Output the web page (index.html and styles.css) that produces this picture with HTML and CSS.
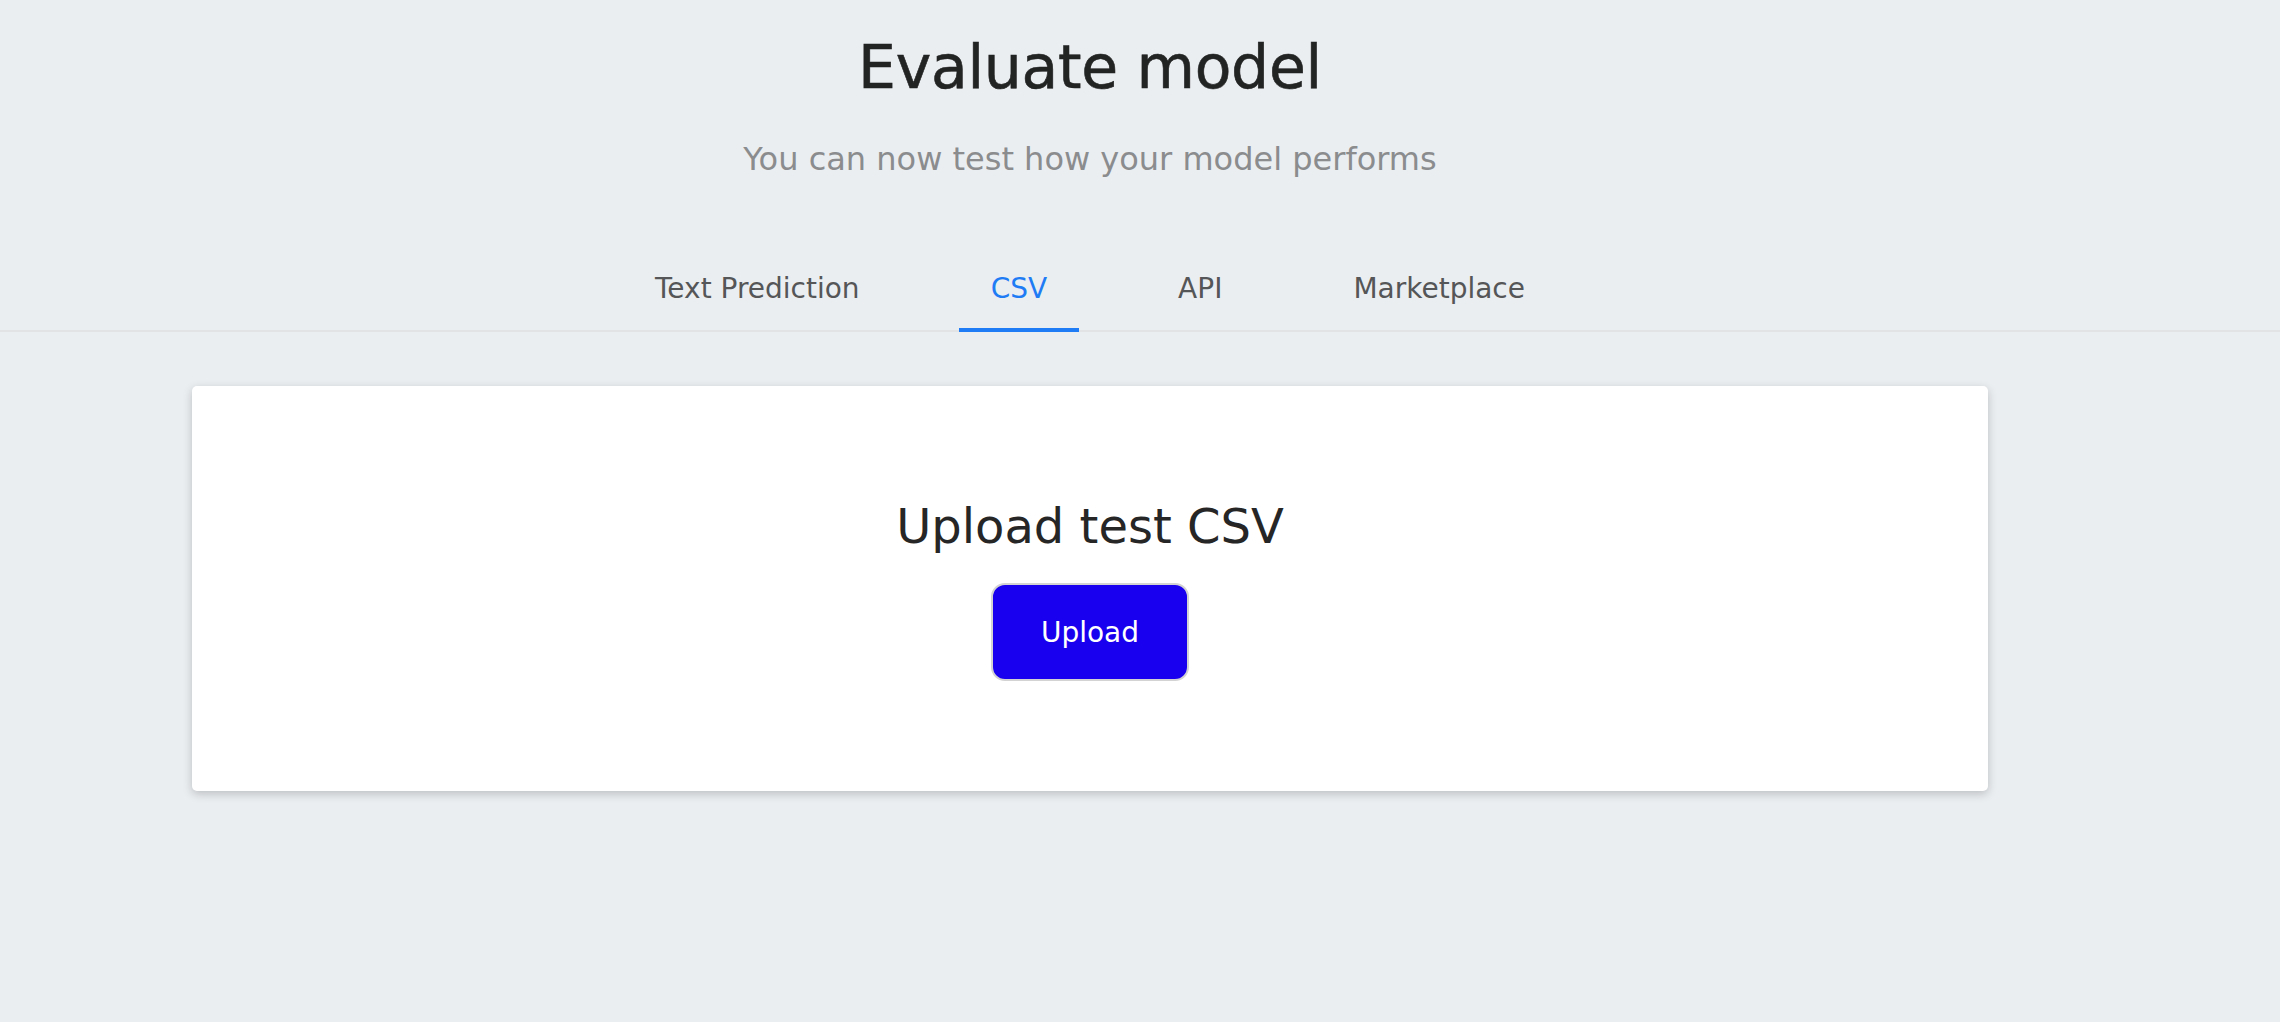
FILE: index.html
```html
<!DOCTYPE html>
<html lang="en">
<head>
<meta charset="utf-8">
<title>Evaluate model</title>
<link rel="stylesheet" href="styles.css">
</head>
<body>
<header class="hero">
  <h1 class="hero-title">Evaluate model</h1>
  <p class="hero-subtitle">You can now test how your model performs</p>
</header>
<nav class="tabs">
  <a class="tab">Text Prediction</a>
  <a class="tab tab-active">CSV</a>
  <a class="tab">API</a>
  <a class="tab">Marketplace</a>
</nav>
<main class="panel-wrap">
  <section class="card">
    <h2 class="card-title">Upload test CSV</h2>
    <button class="upload-btn" type="button">Upload</button>
  </section>
</main>
</body>
</html>
```
FILE: styles.css
```css
* { box-sizing: border-box; }
html, body { margin: 0; }
body {
  background: #ebeef1;
  font-family: "DejaVu Sans", "Liberation Sans", sans-serif;
  width: 2280px;
  min-height: 1022px;
}
.hero {
  padding: 31px 100px 0 0;
  text-align: center;
}
.hero-title {
  margin: 0;
  font-size: 60px;
  line-height: 72px;
  font-weight: 500;
  color: #222323;
  letter-spacing: -0.3px;
  -webkit-text-stroke: 0.6px #222323;
}
.hero-subtitle {
  margin: 36px 0 0;
  font-size: 32px;
  line-height: 40px;
  font-weight: 400;
  color: #8a8c8e;
}
.tabs {
  margin-top: 70px;
  display: flex;
  justify-content: center;
  gap: 67px;
  padding-right: 100px;
  border-bottom: 2px solid #e1e3e5;
}
.tab {
  padding: 20px 32px 19px;
  margin-bottom: -2px;
  border-bottom: 4px solid transparent;
  font-size: 28px;
  line-height: 40px;
  color: #555657;
  cursor: pointer;
}
.tab-active {
  color: #1f7cf4;
  border-bottom-color: #1f7cf4;
}
.panel-wrap {
  padding: 54px 292px 0 192px;
}
.card {
  background: #ffffff;
  border-radius: 5px;
  box-shadow: 0 3px 10px rgba(0, 0, 0, 0.2);
  padding: 112px 0 110px;
  display: flex;
  flex-direction: column;
  align-items: center;
}
.card-title {
  margin: 0;
  font-size: 48px;
  line-height: 56px;
  font-weight: 500;
  color: #262626;
}
.upload-btn {
  margin-top: 29px;
  width: 198px;
  height: 98px;
  border: 2px solid #d3d3d3;
  border-radius: 14px;
  background: #1900ef;
  color: #ffffff;
  font-family: inherit;
  font-size: 28px;
  display: flex;
  align-items: center;
  justify-content: center;
  padding: 0;
  cursor: pointer;
}
```
